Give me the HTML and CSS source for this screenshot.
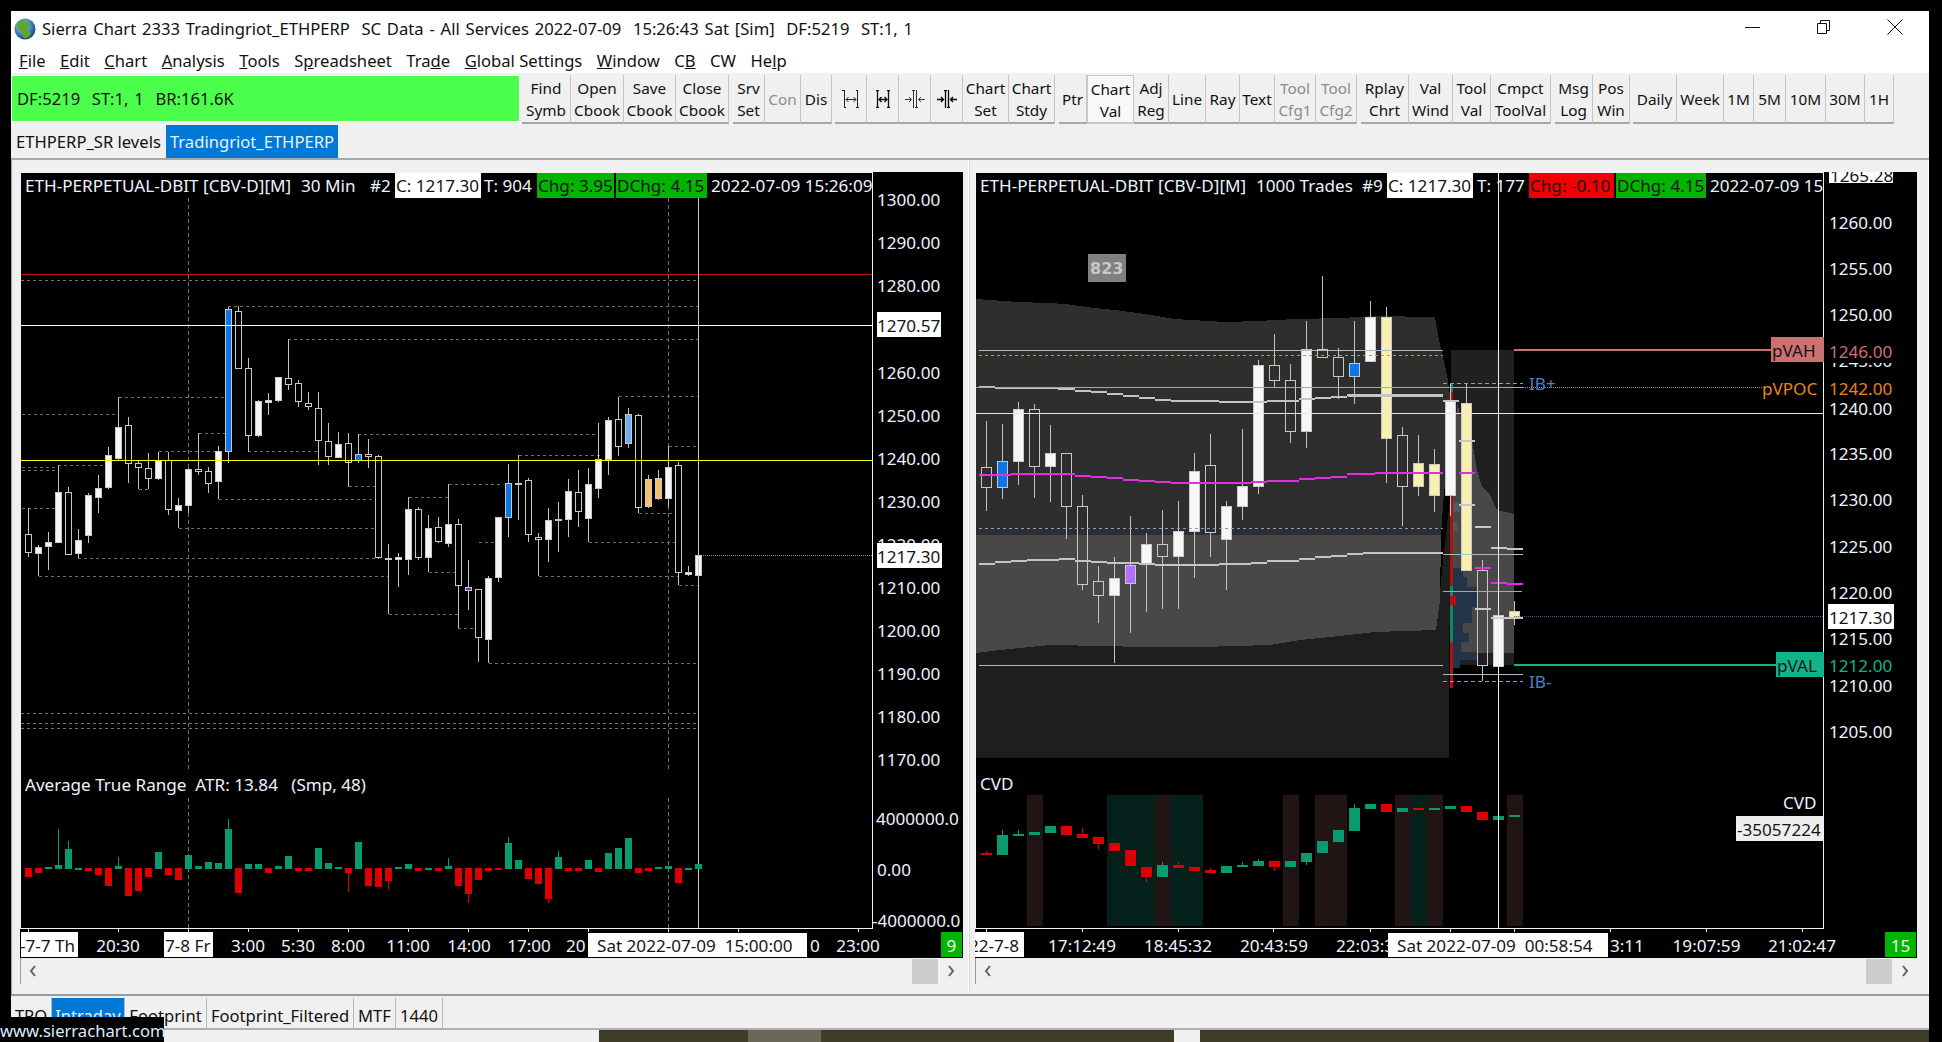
FILE: index.html
```html
<!DOCTYPE html>
<html lang="en">
<head>
<meta charset="utf-8">
<title>Sierra Chart</title>
<link rel="stylesheet" href="styles.css">
</head>
<body>
<div class="window">
  <div class="titlebar">
    <svg class="globe" viewBox="0 0 22 22"><defs><radialGradient id="gl" cx="40%" cy="35%" r="70%"><stop offset="0" stop-color="#cfe6ff"/><stop offset=".55" stop-color="#3f86c8"/><stop offset="1" stop-color="#17406e"/></radialGradient></defs><circle cx="11" cy="11" r="10.5" fill="url(#gl)"/><path d="M6 3c4-2 8 0 9 3 1 2-1 3-1 5s3 2 3 5c-2 3-5 5-7 4-1-3-3-4-4-7-1-2-4-3-3-6 0-2 2-3 3-4z" fill="#5fa62c"/></svg>
    <span class="title">Sierra Chart 2333 Tradingriot_ETHPERP  SC Data - All Services 2022-07-09  15:26:43 Sat [Sim]  DF:5219  ST:1, 1</span>
    <div class="winctl">
      <svg viewBox="0 0 16 16"><path d="M0 8.500h15" stroke="#111" fill="none"/></svg>
      <svg viewBox="0 0 16 16"><path d="M1.500 4.500h9v10h-9zM4.500 4.500v-3h9v10h-3" stroke="#111" fill="none"/></svg>
      <svg viewBox="0 0 16 16"><path d="M.5.5l15 15M15.500 .5l-15 15" stroke="#111" fill="none"/></svg>
    </div>
  </div>
  <div class="menubar">
    <span><u>F</u>ile</span><span><u>E</u>dit</span><span><u>C</u>hart</span><span><u>A</u>nalysis</span><span><u>T</u>ools</span><span>S<u>p</u>readsheet</span><span>Tra<u>d</u>e</span><span><u>G</u>lobal Settings</span><span><u>W</u>indow</span><span>C<u>B</u></span><span>CW</span><span>He<u>l</u>p</span>
  </div>
  <div class="toolbar">
    <div class="status">DF:5219  ST:1, 1  BR:161.6K</div>
    <div class="tbgroup">
      <div class="tb w49">Find<br>Symb</div><div class="tb w53">Open<br>Cbook</div><div class="tb w52">Save<br>Cbook</div><div class="tb w53">Close<br>Cbook</div>
    </div>
    <div class="tbgroup gap4">
      <div class="tb w32">Srv<br>Set</div><div class="tb w36 off">Con</div><div class="tb w31">Dis</div>
    </div>
    <div class="tbgroup gap3">
      <div class="tb w32"><svg class="ticon" viewBox="0 0 20 18"><path d="M3.500 0v18M1 .5h2M3 17.500h2M16.500 0v18M15 .5h2M15 17.500h3M5 9.500h10M7.500 7l-2.500 2.500 2.500 2.500M12.500 7l2.500 2.500-2.500 2.500" stroke="#222" fill="none"/></svg></div>
      <div class="tb w32"><svg class="ticon" viewBox="0 0 20 18"><path d="M4.500 0v18M3 .5h3M3 17.500h3M15.500 0v18M14 .5h3M14 17.500h3M6 9.500h8M8.500 7l-2.500 2.500 2.500 2.500M11.500 7l2.500 2.500-2.500 2.500" stroke="#111" stroke-width="1.300" fill="none"/></svg></div>
      <div class="tb w32"><svg class="ticon" viewBox="0 0 20 18"><path d="M8.500 0v18M11.500 0v18M7 .5h3M10 17.500h3M0 9.500h6M4 7l2.500 2.500-2.500 2.500M14 9.500h6M16 7l-2.500 2.500 2.500 2.500" stroke="#333" fill="none"/></svg></div>
      <div class="tb w32"><svg class="ticon" viewBox="0 0 20 18"><path d="M8.500 0v18M11.500 0v18M7 .5h3M10 17.500h3M0 9.500h6M4 7l2.500 2.500-2.500 2.500M14 9.500h6M16 7l-2.500 2.500 2.500 2.500" stroke="#000" stroke-width="1.300" fill="none"/></svg></div>
      <div class="tb w46">Chart<br>Set</div><div class="tb w46">Chart<br>Stdy</div>
    </div>
    <div class="tbgroup gap4">
      <div class="tb w28">Ptr</div><div class="tb w47 pressed">Chart<br>Val</div><div class="tb w35">Adj<br>Reg</div><div class="tb w37">Line</div><div class="tb w34">Ray</div><div class="tb w35">Text</div><div class="tb w41 off">Tool<br>Cfg1</div><div class="tb w41 off">Tool<br>Cfg2</div>
    </div>
    <div class="tbgroup gap4">
      <div class="tb w48">Rplay<br>Chrt</div><div class="tb w44">Val<br>Wind</div><div class="tb w38">Tool<br>Val</div><div class="tb w60">Cmpct<br>ToolVal</div>
    </div>
    <div class="tbgroup gap4">
      <div class="tb w38">Msg<br>Log</div><div class="tb w37">Pos<br>Win</div>
    </div>
    <div class="tbgroup gap3">
      <div class="tb w44">Daily</div><div class="tb w47">Week</div><div class="tb w30">1M</div><div class="tb w32">5M</div><div class="tb w40">10M</div><div class="tb w39">30M</div><div class="tb w29">1H</div>
    </div>
  </div>
  <div class="tabs">
    <div class="tab t154">ETHPERP_SR levels</div><div class="tab t172 active">Tradingriot_ETHPERP</div>
  </div>
  <div class="work">
    <section class="pane left">
      <svg class="chart" width="943" height="786" viewBox="20 172 943 786">
        <g id="leftMarks" class="marks"></g>
        <rect class="axisbg" x="873" y="172" width="90" height="756"/>
        <text class="tx" x="25" y="185">ETH-PERPETUAL-DBIT [CBV-D][M]</text>
        <text class="tx" x="301" y="185">30 Min</text>
        <text class="tx" x="370" y="185">#2</text>
        <rect class="bw" x="395" y="173" width="86" height="25"/><text class="tx dk" x="396" y="185">C: 1217.30</text>
        <text class="tx" x="484" y="185">T: 904</text>
        <rect class="bg" x="537" y="173" width="77" height="25"/><text class="tx dk" x="538" y="185">Chg: 3.95</text>
        <rect class="bg" x="616" y="173" width="91" height="25"/><text class="tx dk" x="617" y="185">DChg: 4.15</text>
        <text class="tx" x="711" y="185">2022-07-09 15:26:09</text>
        <rect class="axisbg" x="873" y="172" width="90" height="30"/>
        <path class="axisline" d="M20.500 172V928.500H872.500V172M20 172.500H873"/>
        <text class="tx" x="25" y="784">Average True Range  ATR: 13.84   (Smp, 48)</text>
        <text class="tx" x="877" y="199">1300.00</text><text class="tx" x="877" y="242">1290.00</text><text class="tx" x="877" y="285.500">1280.00</text><text class="tx" x="877" y="372.500">1260.00</text><text class="tx" x="877" y="415.500">1250.00</text><text class="tx" x="877" y="458">1240.00</text><text class="tx" x="877" y="501.500">1230.00</text><text class="tx" x="877" y="544.500">1220.00</text><text class="tx" x="877" y="587">1210.00</text><text class="tx" x="877" y="630">1200.00</text><text class="tx" x="877" y="673">1190.00</text><text class="tx" x="877" y="716.500">1180.00</text><text class="tx" x="877" y="759">1170.00</text>
        <rect class="bw" x="877" y="312" width="64" height="25"/><text class="tx dk" x="877" y="325">1270.57</text>
        <rect class="bw" x="877" y="543" width="65" height="25"/><text class="tx dk" x="877" y="556">1217.30</text>
        <text class="tx" x="876" y="818">4000000.0</text><text class="tx" x="877" y="869">0.00</text><text class="tx" x="872" y="920">-4000000.0</text>
        <rect class="bw" x="21" y="932" width="57" height="25"/><text class="tx dk" x="20" y="945">-7-7 Th</text>
        <text class="tx mid" x="118" y="945">20:30</text>
        <rect class="bw" x="164" y="932" width="49" height="25"/><text class="tx dk" x="165" y="945">7-8 Fr</text>
        <text class="tx mid" x="248" y="945">3:00</text><text class="tx mid" x="298" y="945">5:30</text><text class="tx mid" x="348" y="945">8:00</text><text class="tx mid" x="408" y="945">11:00</text><text class="tx mid" x="469" y="945">14:00</text><text class="tx mid" x="529" y="945">17:00</text>
        <text class="tx" x="566" y="945">20</text>
        <text class="tx" x="810" y="945">0</text>
        <rect class="bw" x="588" y="933" width="219" height="24"/><text class="tx dk" x="597" y="945">Sat 2022-07-09  15:00:00</text>
        <text class="tx mid" x="858" y="945">23:00</text>
        <rect class="bg" x="941" y="932" width="21" height="25"/><text class="tx mid lg" x="951.500" y="945">9</text>
      </svg>
      <div class="scroll"><svg class="arrow" viewBox="0 0 24 24"><path d="M14 7l-4 5 4 5"/></svg><span class="track"></span><span class="thumb"></span><svg class="arrow" viewBox="0 0 24 24"><path d="M10 7l4 5-4 5"/></svg></div>
    </section>
    <section class="pane right">
      <svg class="chart" width="942" height="786" viewBox="975 172 942 786">
        <g id="rightMarks" class="marks"></g>
        <rect class="axisbg" x="1824" y="172" width="93" height="756"/>
        <text class="tx" x="980" y="185">ETH-PERPETUAL-DBIT [CBV-D][M]</text>
        <text class="tx" x="1256" y="185">1000 Trades</text>
        <text class="tx" x="1362" y="185">#9</text>
        <rect class="bw" x="1387" y="173" width="86" height="25"/><text class="tx dk" x="1388" y="185">C: 1217.30</text>
        <text class="tx" x="1477" y="185">T: 177</text>
        <rect class="br" x="1529" y="173" width="85" height="25"/><text class="tx dk" x="1530" y="185">Chg: -0.10</text>
        <rect class="bg" x="1616" y="173" width="90" height="25"/><text class="tx dk" x="1617" y="185">DChg: 4.15</text>
        <rect class="cy" x="1529" y="172" width="85" height="1"/><rect class="mg" x="1616" y="172" width="90" height="1"/>
        <text class="tx" x="1710" y="185">2022-07-09 15:26:09</text>
        <rect class="axisbg" x="1824" y="172" width="93" height="30"/>
        <path class="axisline" d="M975.500 172V928.500H1823.500V172M975 172.500H1824"/>
        <rect class="bw" x="1829" y="172" width="64" height="11"/><text class="tx dk" x="1830" y="175">1265.28</text>
        <text class="tx" x="1829" y="222">1260.00</text><text class="tx" x="1829" y="268">1255.00</text><text class="tx" x="1829" y="314">1250.00</text><text class="tx" x="1829" y="360">1245.00</text><text class="tx" x="1829" y="408">1240.00</text><text class="tx" x="1829" y="453">1235.00</text><text class="tx" x="1829" y="499.500">1230.00</text><text class="tx" x="1829" y="546">1225.00</text><text class="tx" x="1829" y="592">1220.00</text><text class="tx" x="1829" y="638">1215.00</text><text class="tx" x="1829" y="685">1210.00</text><text class="tx" x="1829" y="731.500">1205.00</text>
        <rect class="axisbg" x="1825" y="338" width="70" height="25"/><text class="tx pinkt" x="1829" y="351">1246.00</text>
        <text class="tx oranget" x="1829" y="388">1242.00</text>
        <rect class="bw" x="1828" y="604" width="66" height="25"/><text class="tx dk" x="1829" y="617">1217.30</text>
        <rect class="axisbg" x="1825" y="655" width="70" height="22"/><text class="tx tealt" x="1829" y="665">1212.00</text>
        <rect class="pinkb" x="1771" y="337" width="53" height="25"/><text class="tx dk" x="1772" y="350">pVAH</text>
        <text class="tx oranget" x="1762" y="388">pVPOC</text>
        <rect class="tealb" x="1776" y="652" width="48" height="25"/><text class="tx dk" x="1777" y="665">pVAL</text>
        <text class="tx ib" x="1529" y="383">IB+</text><text class="tx ib" x="1529" y="681">IB-</text>
        <rect class="bxg" x="1088" y="254" width="38" height="28"/><text class="tx b823" x="1090" y="268">823</text>
        <text class="tx" x="980" y="783">CVD</text>
        <text class="tx" x="1783" y="802">CVD</text>
        <rect class="bl" x="1736" y="816" width="88" height="25"/><text class="tx dk" x="1737" y="829">-35057224</text>
        <rect class="bw" x="975" y="932" width="49" height="25"/><text class="tx dk" x="969" y="945">22-7-8</text>
        <text class="tx mid" x="1082" y="945">17:12:49</text><text class="tx mid" x="1178" y="945">18:45:32</text><text class="tx mid" x="1274" y="945">20:43:59</text><text class="tx" x="1336" y="945">22:03:33</text><text class="tx" x="1610" y="945">3:11</text><text class="tx mid" x="1706.500" y="945">19:07:59</text><text class="tx mid" x="1802" y="945">21:02:47</text>
        <rect class="bw" x="1388" y="933" width="220" height="24"/><text class="tx dk" x="1397" y="945">Sat 2022-07-09  00:58:54</text>
        <rect class="bg" x="1885" y="932" width="31" height="25"/><text class="tx mid lg" x="1900.500" y="945">15</text>
      </svg>
      <div class="scroll"><svg class="arrow" viewBox="0 0 24 24"><path d="M14 7l-4 5 4 5"/></svg><span class="track"></span><span class="thumb"></span><svg class="arrow" viewBox="0 0 24 24"><path d="M10 7l4 5-4 5"/></svg></div>
    </section>
  </div>
  <div class="sheets">
    <div class="sheet s40">TPO</div><div class="sheet s73 active">Intraday</div><div class="sheet s82">Footprint</div><div class="sheet s147">Footprint_Filtered</div><div class="sheet s42">MTF</div><div class="sheet s47">1440</div>
  </div>
  <div class="strip">
    <span class="seg light s588"></span><span class="seg olive s149"></span><span class="seg stone s73b"></span><span class="seg olive s353"></span><span class="seg light s26"></span><span class="seg olive grow"></span>
  </div>
</div>
<div class="website">www.sierrachart.com</div>
<script src="chart.js"></script>
</body>
</html>
```
FILE: styles.css
```css
* { box-sizing: border-box; }
html, body { margin: 0; height: 1042px; overflow: hidden; background: #000; }
body { font-family: "Noto Sans", "Open Sans", sans-serif; font-size: 16px; color: #111; }
.window { margin: 11px 13px 0 11px; width: 1918px; height: 1031px; background: #f0f0f0; display: flex; flex-direction: column; }

.titlebar { height: 31px; background: #fff; display: flex; align-items: center; padding: 4px 0 0 3px; }
.globe { width: 22px; height: 22px; margin-right: 6px; flex: none; }
.title { white-space: pre; font-size: 16.6px; word-spacing: 1.5px; }
.winctl { margin: -4px 0 0 auto; display: flex; gap: 55px; padding-right: 26px; }
.winctl svg { width: 16px; height: 16px; display: block; }

.menubar { height: 31px; background: #fff; display: flex; align-items: center; gap: 14.5px; padding: 6px 0 0 8px; font-size: 16.6px; white-space: pre; }

.toolbar { height: 52px; display: flex; align-items: flex-start; padding-top: 2px; }
.status { width: 509px; height: 47px; background: #4dff4d; border: 1px solid #fff; margin-right: 2px; padding-left: 5px; display: flex; align-items: center; font-size: 16.6px; word-spacing: 1.5px; white-space: pre; }
.tbgroup { display: flex; }
.gap4 { margin-left: 4px; }
.gap3 { margin-left: 3px; }
.tb { height: 49px; display: flex; align-items: center; justify-content: center; text-align: center; font-size: 15.3px; line-height: 22px; padding-top: 1px; background: #f0f0f0; border-right: 1px solid #c6c6c6; border-bottom: 2px solid #a6a6a6; }
.tb.off { color: #8c8c8c; }
.tb.pressed { background: #f8f8f8; border: 1px solid #c8c8c8; border-bottom: 2px solid #c8c8c8; }
.ticon { width: 20px; height: 18px; display: block; }
.w28 { width: 28px; } .w29 { width: 29px; } .w30 { width: 30px; } .w31 { width: 31px; } .w32 { width: 32px; }
.w34 { width: 34px; } .w35 { width: 35px; } .w36 { width: 36px; } .w37 { width: 37px; } .w38 { width: 38px; }
.w39 { width: 39px; } .w40 { width: 40px; } .w41 { width: 41px; } .w44 { width: 44px; } .w46 { width: 46px; }
.w47 { width: 47px; } .w48 { width: 48px; } .w49 { width: 49px; } .w52 { width: 52px; } .w53 { width: 53px; } .w60 { width: 60px; }

.tabs { height: 33px; display: flex; align-items: stretch; }
.tab { display: flex; align-items: center; justify-content: center; font-size: 16.6px; white-space: pre; }
.tab.active, .sheet.active { background: #0078d7; color: #e8f2ff; }
.t154 { width: 155px; } .t172 { width: 172px; }

.work { height: 838px; display: flex; border-top: 2px solid #a8a8a8; border-bottom: 2px solid #9a9a9a; }
.pane { padding-top: 12px; display: flex; flex-direction: column; }
.pane.left { width: 958px; padding-left: 8px; padding-right: 5px; border-left: 1px solid #a0a0a0; border-right: 1px solid #fff; }
.pane.right { width: 960px; padding-left: 5px; padding-right: 11px; border-left: 1px solid #d8d8d8; border-right: 1px solid #fff; }
.chart { display: block; background: #000; flex: none; }
.scroll { height: 26px; display: flex; align-items: center; border-left: 1px solid #9a9a9a; }
.arrow { width: 24px; height: 24px; flex: none; display: block; }
.arrow path { fill: none; stroke: #606060; stroke-width: 2; }
.track { flex: 1; }
.thumb { width: 26px; height: 25px; background: #cdcdcd; margin-right: 1px; }

.sheets { height: 34px; display: flex; padding-top: 2px; border-bottom: 2px solid #b0b0b0; }
.sheet { height: 32px; display: flex; align-items: center; justify-content: center; padding-top: 2px; font-size: 16.6px; border-right: 1px solid #b8b8b8; }
.s40 { width: 41px; } .s73 { width: 73px; } .s82 { width: 82px; } .s147 { width: 147px; } .s42 { width: 42px; } .s47 { width: 47px; }

.strip { flex: 1; display: flex; }
.seg { display: block; }
.light { background: #f0f0f0; }
.olive { background: #3f3c28; }
.stone { background: #6b6858; }
.s588 { width: 588px; } .s149 { width: 149px; } .s73b { width: 73px; } .s353 { width: 353px; } .s26 { width: 26px; }
.grow { flex: 1; }

.website { position: absolute; left: 0; top: 1017px; width: 164px; height: 25px; background: #000; color: #dcecff; font-size: 16.6px; line-height: 27px; text-align: left; white-space: pre; }

/* chart canvas */
.marks { shape-rendering: crispEdges; }
.axisbg { fill: #000; }
.axisline { fill: none; stroke: #f2f2f2; stroke-width: 1; shape-rendering: crispEdges; }
.tx { font-family: "Noto Sans", "Open Sans", sans-serif; font-size: 17.1px; fill: #eaf4ff; dominant-baseline: central; white-space: pre; }
.dk { fill: #151515; }
.mid { text-anchor: middle; }
.lg { fill: #e8ffe8; }
.bw { fill: #fff; } .bg { fill: #00b400; } .br { fill: #f00000; } .bl { fill: #eeeeee; } .cy { fill: #18c8c8; } .mg { fill: #c838c8; }
.pinkb { fill: #cc7070; } .tealb { fill: #10b488; } .bxg { fill: #808080; }
.pinkt { fill: #cc7070; } .oranget { fill: #e88518; } .tealt { fill: #10b488; } .ib { fill: #4a80c8; }
.b823 { fill: #c8c8c8; font-family: "DejaVu Sans", sans-serif; font-weight: 700; font-size: 16px; }
```
FILE: chart.js
```js
(function () {
  var out = [];
  function rect(x, y, w, h, f) { out.push('<rect x="' + x + '" y="' + y + '" width="' + w + '" height="' + h + '" fill="' + f + '"/>'); }
  function line(x1, y1, x2, y2, c, w, d) { out.push('<line x1="' + x1 + '" y1="' + y1 + '" x2="' + x2 + '" y2="' + y2 + '" stroke="' + c + '" stroke-width="' + (w || 1) + '"' + (d ? ' stroke-dasharray="' + d + '"' : '') + '/>'); }
  function poly(p, f) { out.push('<polygon points="' + p + '" fill="' + f + '"/>'); }
  var FILL = { h: 'none', w: '#f6f6f6', b: '#0a78e8', l: '#69aef0', o: '#f5c264', p: '#b56cff', c: '#f9efb0', v: '#7a20e0' };
  function candle(cx, bw, t, b, wt, wb, k) {
    var x = Math.floor(cx - bw / 2);
    if (wt < t) line(cx, wt, cx, t, '#c4c4c4');
    if (wb > b) line(cx, b, cx, wb, '#c4c4c4');
    out.push('<rect x="' + (x + 0.5) + '" y="' + (Math.round(t) + 0.5) + '" width="' + (bw - 1) + '" height="' + Math.max(1, Math.round(b - t)) + '" fill="' + FILL[k] + '" stroke="#c8c8c8"/>');
  }

  /* ---------- left chart ---------- */
  var ly = function (v) { return 280 + v / 3; };
  var L = [[763,817,685,830,'h'],[800,818,795,889,'w'],[787,800,755,870,'w'],[637,788,556,790,'w'],[637,822,620,825,'h'],[781,821,748,835,'w'],[646,767,640,790,'w'],[625,653,585,698,'w'],[526,623,500,628,'w'],[442,536,352,540,'w'],[436,550,410,610,'h'],[550,563,540,628,'h'],[565,596,518,628,'h'],[541,596,515,600,'w'],[541,688,515,705,'h'],[676,692,655,745,'w'],[568,677,565,700,'w'],[568,575,460,585,'h'],[574,611,560,640,'h'],[514,605,498,658,'w'],[88,515,80,548,'b'],[93,263,78,265,'h'],[263,464,235,515,'h'],[364,467,360,470,'w'],[361,368,340,405,'w'],[292,362,290,365,'w'],[295,314,178,330,'h'],[310,365,300,380,'h'],[368,377,335,390,'h'],[385,482,335,555,'h'],[484,530,430,555,'h'],[492,530,455,535,'w'],[488,544,460,620,'h'],[523,541,463,550,'b'],[523,530,478,565,'h'],[529,832,525,838,'h'],[833,836,792,1002,'w'],[831,836,820,922,'w'],[688,838,652,885,'w'],[688,832,680,840,'h'],[745,832,705,877,'w'],[742,785,710,790,'h'],[731,788,612,800,'w'],[733,916,718,1044,'h'],[920,928,840,990,'v'],[928,1072,1044,1145,'h'],[895,1078,888,1150,'w'],[712,892,710,905,'w'],[610,713,552,770,'b'],[610,614,525,720,'w'],[601,764,595,785,'h'],[772,778,760,888,'h'],[721,778,685,845,'w'],[718,722,665,815,'w'],[634,718,598,770,'w'],[637,694,570,740,'h'],[613,716,565,787,'w'],[536,622,430,655,'w'],[421,539,410,585,'w'],[418,499,350,528,'h'],[403,490,385,505,'l'],[404,680,402,700,'h'],[598,680,585,685,'o'],[595,655,570,660,'o'],[562,655,497,680,'w'],[556,877,545,915,'h'],[876,883,858,888,'w'],[826,886,770,905,'w']];
  var LD = [[365,1117,78],[461,1117,178],[190,360,352],[35,190,403],[318,360,460],[573,955,463],[397,510,514],[254,345,514],[830,960,526],[93,170,556],[35,93,560],[35,90,571],[222,240,628],[558,600,619],[718,805,612],[350,600,658],[654,716,652],[1022,1080,700],[35,90,685],[286,600,745],[686,730,877],[766,795,787],[942,1080,787],[125,600,835],[62,620,889],[862,1085,889],[1086,1117,916],[622,733,1002],[733,760,1044],[782,1113,1150],[990,1117,349],[1070,1117,498]];
  line(188.5, 198, 188.5, 770, '#707070', 1, '4 3'); line(188.5, 798, 188.5, 928, '#707070', 1, '4 3');
  line(668.5, 198, 668.5, 770, '#707070', 1, '4 3'); line(668.5, 798, 668.5, 928, '#707070', 1, '4 3');
  LD.forEach(function (d) { line(d[0] / 1.6, Math.round(ly(d[2])) + 0.5, d[1] / 1.6, Math.round(ly(d[2])) + 0.5, '#6c6c6c', 1, '3 3'); });
  [713, 723, 728, 280].forEach(function (y) { line(21, y + 0.5, 697, y + 0.5, '#747474', 1, '3 3'); });
  line(21, 274.5, 872, 274.5, '#c81414');
  L.forEach(function (c, i) { candle(28.5 + 10 * i, 7, ly(c[0]), ly(c[1]), ly(c[2]), ly(c[3]), c[4]); });
  line(21, 325.5, 872, 325.5, '#ffffff', 1);
  line(21, 460.5, 872, 460.5, '#ffff00', 1);
  line(703, 555.5, 872, 555.5, '#8a8a8a', 1, '1 1');
  line(698.5, 172, 698.5, 928, '#c8c8c8');
  var H = [[325,352,'r'],[325,339,'r'],[322,327,'g'],[315,327,'g',207],[267,327,'g',243],[324,327,'g'],[325,334,'r'],[325,345,'r'],[325,378,'r'],[318,327,'g',292],[325,408,'r'],[325,393,'r'],[325,351,'r'],[276,327,'g'],[325,345,'r'],[325,360,'r'],[285,327,'g'],[318,327,'g'],[306,327,'g'],[309,327,'g'],[207,327,'g',178],[325,399,'r'],[312,327,'g'],[312,327,'g'],[325,340,'r'],[318,327,'g'],[288,327,'g'],[325,333,'r'],[325,333,'r'],[264,327,'g'],[309,327,'g'],[321,327,'g'],[325,339,'r',395],[246,327,'g'],[325,378,'r'],[325,381,'r'],[325,363,'r',390],[321,327,'g'],[312,327,'g'],[325,335,'r'],[324,327,'g'],[325,333,'r'],[318,327,'g',295],[325,378,'r'],[325,402,'r',430],[325,360,'r'],[325,333,'r'],[325,327,'r'],[249,327,'g',231],[300,327,'g'],[325,357,'r'],[325,372,'r'],[325,417,'r',430],[291,327,'g',273],[325,335,'r'],[325,333,'r'],[300,327,'g'],[325,336,'r'],[279,327,'g'],[264,327,'g'],[234,327,'g'],[325,339,'r'],[325,333,'r'],[321,327,'g'],[318,327,'g'],[325,369,'r'],[324,327,'g'],[312,327,'g']];
  var GREEN = '#0a9a70', RED = '#dc0000';
  H.forEach(function (h, i) {
    var c = h[2] === 'g' ? GREEN : RED, x = 28 + 10 * i, t = 760 + h[0] / 3, b = 760 + h[1] / 3;
    if (h[3]) { var e = 760 + h[3] / 3; line(x + 0.5, Math.min(e, t), x + 0.5, Math.max(e, b), c); }
    rect(x - 3, Math.round(t), 7, Math.max(2, Math.round(b - t)), c);
  });
  [45,189,301,397,477,557,653,749,845,941,1069,1181,1373].forEach(function (z) { line(z / 1.6, 929, z / 1.6, 932, '#e8e8e8'); });
  [200,243,286,329,372,415,458,501,544,587,630,673,716,759,818,869,920].forEach(function (y) { line(873, y, 876, y, '#e8e8e8'); });
  document.getElementById('leftMarks').innerHTML = out.join('');

  /* ---------- right chart ---------- */
  out = [];
  var z9x = function (v) { return 975 + v / 3; }, z9y = function (v) { return 260 + v / 3; }, z10x = function (v) { return 1380 + v / 3; }, z10y = function (v) { return 340 + v / 3; };
  poly('976,640 1437,625 1443,560 1450,500 1449,758 976,758', '#1e1e1e');
  poly('976,299 1018,302 1048,303 1065,304 1095,308 1115,310 1145,314 1175,319 1225,322 1258,321 1295,319 1342,318 1375,316 1435,317 1439,340 1447,375 1450,395 1448,450 1443,506 1441,535 976,535', '#2e2e2e');
  poly('976,535 1441,535 1440,600 1436,630 1375,632 1340,636 1300,640 1270,645 1200,647 1140,647 1105,646 1050,645 1030,647 1000,650 976,653', '#484848');
  rect(1451, 350, 63, 315, '#202020');
  poly('1457,403 1462,420 1472,440 1477,470 1482,487 1490,495 1497,510 1514,514 1514,653 1452,653 1452,500', '#484848');
  poly('1453,568 1463,568 1463,577 1467,577 1467,587 1477,587 1477,607 1472,607 1472,623 1463,623 1463,633 1469,633 1469,642 1461,642 1461,652 1477,652 1477,660 1460,660 1460,668 1453,668', '#223548');
  rect(1453, 503, 7, 9, '#4e5a60'); rect(1453, 522, 4, 9, '#4e5a60');

  var R9 = [[620,680,484,752,'h'],[604,683,492,716,'b'],[448,605,426,675,'w'],[448,620,432,714,'h'],[580,620,495,725,'w'],[580,740,580,836,'h'],[739,973,705,990,'h'],[964,1006,918,1088,'h'],[955,1006,890,1208,'w'],[916,970,768,1118,'p'],[853,913,820,1055,'w'],[853,890,750,1047,'h'],[814,890,723,1047,'w'],[634,815,578,953,'w'],[616,818,522,890,'h'],[739,838,723,990,'w'],[679,740,507,780,'w'],[316,680,300,702,'w'],[316,361,222,382,'h'],[361,515,312,548,'h'],[268,515,183,563,'w'],[268,292,48,268,'h'],[292,350,264,416,'h'],[310,350,183,432,'b'],[172,305,123,305,'w']];
  R9.forEach(function (c, i) { candle(986.5 + 16 * i, 11, z9y(c[0]), z9y(c[1]), z9y(c[2]), z9y(c[3]), c[4]); });
  candle(1386.5, 11, 317, 437.7, 306.7, 483, 'c');
  var R10 = [[286,440,262,558,'h'],[370,440,285,468,'c'],[373,467,327,516,'c'],[183,464,130,528,'w'],[190,692,130,190,'c'],[691,977,660,1023,'h'],[826,980,708,1100,'w'],[813,830,783,855,'c']];

  // red / green volume column under the late candles
  rect(1450, 383, 3, 9, '#0a8a6a'); rect(1450, 392, 3, 194, '#b01010'); rect(1450, 586, 3, 10, '#0a8a6a'); rect(1450, 596, 6, 9, '#b01010'); rect(1450, 605, 3, 37, '#0a8a6a'); rect(1450, 642, 3, 46, '#b01010');
  R10.forEach(function (c, i) { candle(1402.5 + 16 * i, 11, z10y(c[0]), z10y(c[1]), z10y(c[2]), z10y(c[3]), c[4]); });

  function steps(a, c, w) { a.forEach(function (s) { var y = z9y(s[2]); rect(z9x(s[0]), Math.round(y - w / 2), (s[1] - s[0]) / 3, w, c); }); }
  steps([[12,60,380],[60,250,384],[250,300,387],[300,348,393],[348,396,396],[396,444,402],[444,492,408],[492,540,414],[540,588,420],[588,732,423],[732,876,426],[876,972,423],[972,1020,417],[1020,1068,414],[1068,1116,411],[1116,1404,405]], '#c4c4c4', 2);
  rect(1443 - 95, 395, 95, 2, '#c4c4c4');
  steps([[12,60,912],[60,108,906],[108,156,903],[156,252,900],[252,300,897],[300,348,903],[348,396,906],[396,492,909],[492,540,912],[540,732,915],[732,828,912],[828,876,909],[876,972,903],[972,1020,897],[1020,1068,891],[1068,1116,888],[1116,1164,882],[1164,1200,879]], '#c4c4c4', 2);
  rect(1375, 552, 68, 2, '#c4c4c4');
  steps([[12,108,645],[108,300,642],[300,348,648],[348,396,651],[396,444,654],[444,492,660],[492,540,663],[540,588,666],[588,828,669],[828,876,666],[876,972,663],[972,1020,657],[1020,1068,654],[1068,1116,651],[1116,1200,642]], '#e030e0', 2);
  rect(1375, 472, 68, 2, '#e030e0');
  [[237,285,398,'#e030e0'],[285,333,684,'#e030e0'],[333,381,729,'#e030e0'],[381,429,732,'#f020f0'],[189,237,183,'#c8c8c8'],[237,285,303,'#c8c8c8'],[237,285,495,'#c8c8c8'],[285,333,561,'#c8c8c8'],[333,381,624,'#c8c8c8'],[381,429,627,'#c8c8c8'],[285,333,807,'#c8c8c8'],[333,429,833,'#c8c8c8']].forEach(function (s) { rect(z10x(s[0]), Math.round(z10y(s[2])) - 1, (s[1] - s[0]) / 3, 2, s[3]); });

  line(979, 350.5, 1443, 350.5, '#a8bcc8'); line(979, 355.5, 1443, 355.5, '#7f9fd0', 1, '3 3');
  line(979, 528.5, 1443, 528.5, '#7f9fd0', 1, '3 3'); line(979, 665.5, 1443, 665.5, '#a8bcc8');
  line(1443, 383.5, 1523, 383.5, '#7f9fd0', 1, '4 3'); line(1443, 554.5, 1523, 554.5, '#a8bcc8');
  line(1443, 674.5, 1523, 674.5, '#a8bcc8'); line(1443, 681.5, 1523, 681.5, '#7f9fd0', 1, '4 3');
  line(976, 387.5, 1523, 387.5, '#e89a48'); line(1523, 387.5, 1762, 387.5, '#e08020', 1, '1 1');
  line(1443, 591.5, 1522, 591.5, '#e89a48');
  line(976, 413.5, 1823, 413.5, '#ffff40');
  line(1514, 616.5, 1823, 616.5, '#3a5f8a', 1, '1 1');
  rect(1514, 349, 257, 2, '#cc7070'); rect(1514, 664, 262, 2, '#10b488');

  // CVD study
  [[107,133,'#201414'],[235,311,'#04201a'],[311,337,'#201414'],[337,388,'#04201a'],[516,541,'#201414'],[567,618,'#201414'],[695,720,'#201414'],[720,745,'#04201a'],[745,771,'#201414'],[873,899,'#201414']].forEach(function (b) { var x = Math.round(960 + b[0] / 1.5967); rect(x, 795, Math.round(960 + b[1] / 1.5967) - x, 131, b[2]); });
  var C = [[279,285,'r',273],[225,285,'g',210],[222,228,'g',210],[216,225,'g'],[198,219,'g'],[198,225,'r'],[222,234,'r',205],[231,252,'r',267],[249,273,'r'],[270,318,'r'],[321,351,'r',366],[315,351,'g',306],[315,324,'r',306],[321,333,'r'],[330,339,'r',324],[318,339,'g'],[315,321,'g',306],[303,318,'g',297],[303,321,'r',333],[303,321,'g'],[279,306,'g',315],[243,279,'g'],[210,246,'g'],[144,213,'g',132],[132,147,'g'],[132,156,'r'],[144,156,'g'],[144,150,'r'],[144,150,'g'],[138,147,'g'],[138,156,'r'],[156,180,'r'],[168,180,'g'],[165,171,'g']];
  C.forEach(function (h, i) {
    var c = h[2] === 'g' ? GREEN : RED, x = 986.5 + 16 * i, t = 760 + h[0] / 3, b = 760 + h[1] / 3;
    if (h[3]) { var e = 760 + h[3] / 3; line(x, Math.min(e, t), x, Math.max(e, b), c); }
    rect(Math.floor(x - 5.5), Math.round(t), 11, Math.max(2, Math.round(b - t)), c);
  });
  line(1498.5, 172, 1498.5, 928, '#f0f0f0');
  [42,195,349,501,655,783,885,1038,1192,1345].forEach(function (z) { var x = 960 + z / 1.5967; line(x, 929, x, 932, '#e8e8e8'); });
  [222,268,314,360,408,453,499,546,592,638,685,731].forEach(function (y) { line(1824, y, 1827, y, '#e8e8e8'); });
  document.getElementById('rightMarks').innerHTML = out.join('');
})();
```
